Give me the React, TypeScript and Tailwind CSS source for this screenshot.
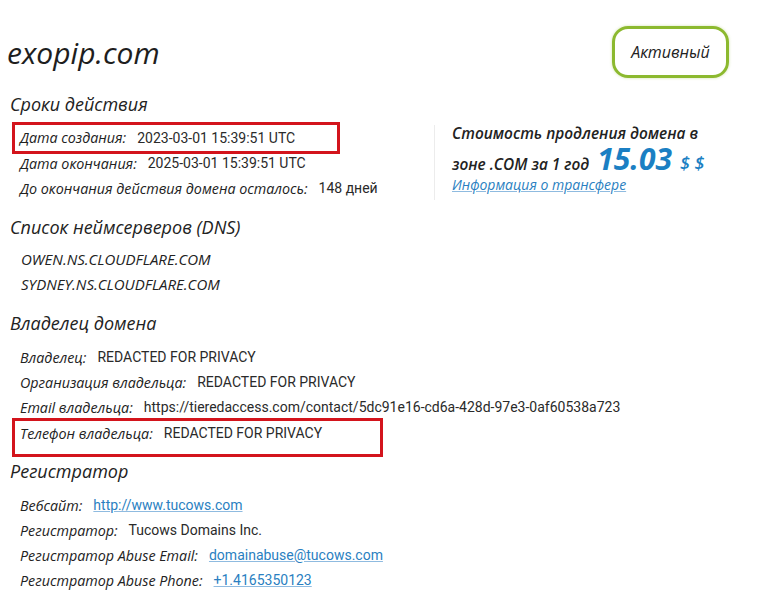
const head = "font-['Open_Sans',sans-serif] italic"
const val = "font-['Roboto',sans-serif] text-[14px] text-[#2a2a2a]"
const lbl = `${head} text-[14.3px] text-[#222] mr-[11px]`

function Row({ label, children }: { label: string; children: React.ReactNode }) {
  return (
    <div className="flex h-[25px] items-center pl-[20px]">
      <span className={lbl}>{label}</span>
      <span className={val}>{children}</span>
    </div>
  )
}

function Heading({ children, className = '' }: { children: React.ReactNode; className?: string }) {
  return (
    <div className={`h-[24px] flex items-center pl-[10px] ${head} text-[18px] text-[#222] ${className}`}>
      {children}
    </div>
  )
}

const linkCls = "text-[#2a7fc1] underline underline-offset-1 decoration-[#8fbbe0]"

export default function App() {
  return (
    <div className="w-[759px] h-[599px] bg-white overflow-hidden">
      {/* header */}
      <div className="mt-[26px] h-[52px] flex items-center justify-between pl-[7px] pr-[30px]">
        <div className={`${head} font-medium text-[30px] text-[#1e1e1e]`}>exopip.com</div>
        <div className="w-[117px] h-[52px] rounded-[16px] border-[3px] border-[#8cb92f] flex items-center justify-center shadow-[0_0_3px_rgba(140,185,47,0.4)]">
          <span className={`${head} font-medium text-[16px] text-[#222]`}>Активный</span>
        </div>
      </div>

      {/* сроки */}
      <Heading className="mt-[14px]">Сроки действия</Heading>
      <div className="flex">
        <div className="w-[434px]">
          <div className="mt-[6px] ml-[12px] w-[328px] h-[32px] border-[3px] border-[#d3141c] flex items-center">
            <div className="flex h-[25px] items-center pl-[5px]">
              <span className={lbl}>Дата создания:</span>
              <span className={val}>2023-03-01 15:39:51 UTC</span>
            </div>
          </div>
          <div className="-mt-[3px]">
            <Row label="Дата окончания:">2025-03-01 15:39:51 UTC</Row>
            <Row label="До окончания действия домена осталось:">148 дней</Row>
          </div>
        </div>
        <div className="mt-[9px] h-[75px] border-l border-[#ececec] pl-[17px] flex flex-col">
          <div className={`${head} font-semibold text-[15.4px] leading-[18px] text-[#222]`}>
            Стоимость продления домена в
          </div>
          <div className="flex items-baseline h-[32px] pt-[3px]">
            <span className={`${head} font-semibold text-[15.4px] leading-[20px] text-[#222]`}>зоне .COM за 1 год</span>
            <span className={`${head} font-bold text-[30px] text-[#1b7fc3] ml-[8px] leading-[26px]`}>15.03</span>
            <span className={`${head} font-semibold text-[18px] leading-[20px] text-[#1b7fc3] ml-[8px]`}>$ $</span>
          </div>
          <div className={`${head} font-medium text-[14px] leading-[20px] ${linkCls}`}>Информация о трансфере</div>
        </div>
      </div>

      {/* DNS */}
      <Heading className="mt-[14px]">Список неймсерверов (DNS)</Heading>
      <div className="mt-[8px]">
        <div className={`h-[25px] flex items-center pl-[21px] ${head} text-[15px] text-[#222]`}>OWEN.NS.CLOUDFLARE.COM</div>
        <div className={`h-[25px] flex items-center pl-[21px] ${head} text-[15px] text-[#222]`}>SYDNEY.NS.CLOUDFLARE.COM</div>
      </div>

      {/* владелец */}
      <Heading className="mt-[14px]">Владелец домена</Heading>
      <div className="mt-[10px]">
        <Row label="Владелец:">REDACTED FOR PRIVACY</Row>
        <Row label="Организация владельца:">REDACTED FOR PRIVACY</Row>
        <Row label="Email владельца:">https://tieredaccess.com/contact/5dc91e16-cd6a-428d-97e3-0af60538a723</Row>
      </div>
      <div className="-mt-[2px] ml-[12px] w-[371px] h-[39px] border-[3px] border-[#d3141c]">
        <div className="flex h-[25px] items-center pl-[5px]">
          <span className={lbl}>Телефон владельца:</span>
          <span className={val}>REDACTED FOR PRIVACY</span>
        </div>
      </div>

      {/* регистратор */}
      <Heading className="mt-[2px]">Регистратор</Heading>
      <div className="mt-[10px]">
        <Row label="Вебсайт:"><span className={linkCls}>http://www.tucows.com</span></Row>
        <Row label="Регистратор:">Tucows Domains Inc.</Row>
        <Row label="Регистратор Abuse Email:"><span className={linkCls}>domainabuse@tucows.com</span></Row>
        <Row label="Регистратор Abuse Phone:"><span className={linkCls}>+1.4165350123</span></Row>
      </div>
    </div>
  )
}
